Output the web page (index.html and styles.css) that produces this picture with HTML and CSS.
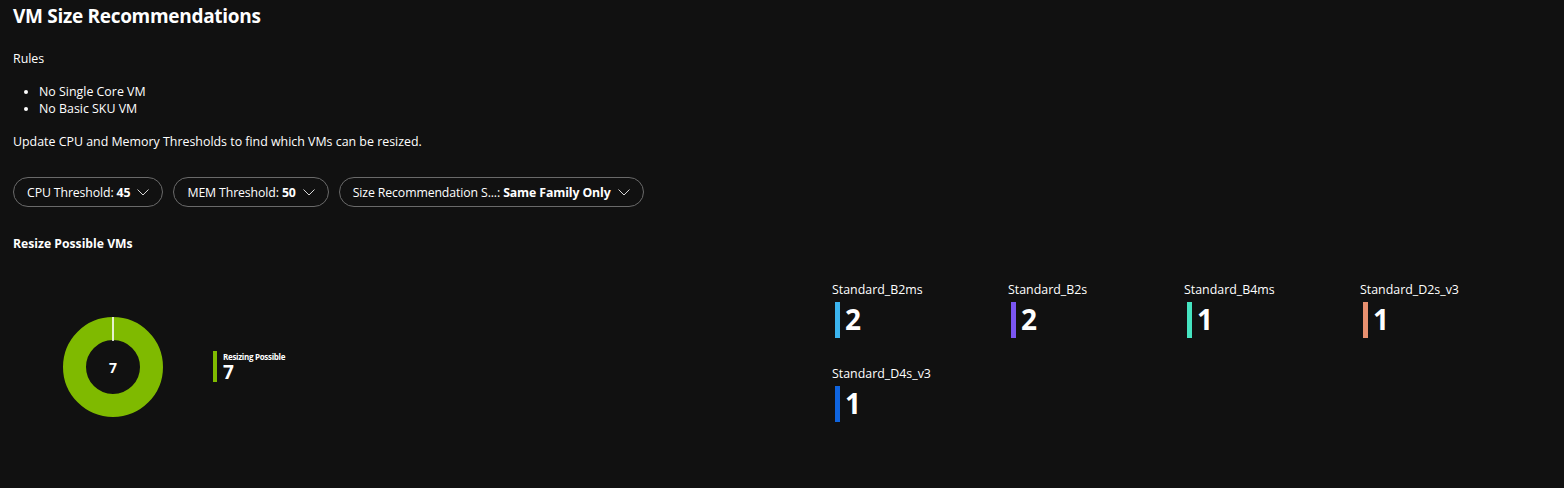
FILE: index.html
```html
<!DOCTYPE html>
<html lang="en">
<head>
<meta charset="utf-8">
<title>VM Size Recommendations</title>
<link rel="stylesheet" href="styles.css">
</head>
<body>
<main class="page">
  <h1 class="title">VM Size Recommendations</h1>
  <p class="rules">Rules</p>
  <ul class="rule-list">
    <li>No Single Core VM</li>
    <li>No Basic SKU VM</li>
  </ul>
  <p class="hint">Update CPU and Memory Thresholds to find which VMs can be resized.</p>

  <div class="filters">
    <button class="pill"><span>CPU Threshold: <b>45</b></span>
      <svg class="chev" viewBox="0 0 12 7" width="12" height="7"><polyline points="0.5,0.5 6,6 11.5,0.5" fill="none" stroke="#d6d6d6" stroke-width="1"/></svg>
    </button>
    <button class="pill"><span>MEM Threshold: <b>50</b></span>
      <svg class="chev" viewBox="0 0 12 7" width="12" height="7"><polyline points="0.5,0.5 6,6 11.5,0.5" fill="none" stroke="#d6d6d6" stroke-width="1"/></svg>
    </button>
    <button class="pill"><span>Size Recommendation S...: <b>Same Family Only</b></span>
      <svg class="chev" viewBox="0 0 12 7" width="12" height="7"><polyline points="0.5,0.5 6,6 11.5,0.5" fill="none" stroke="#d6d6d6" stroke-width="1"/></svg>
    </button>
  </div>

  <h2 class="section-title">Resize Possible VMs</h2>

  <section class="charts">
    <div class="donut-area">
      <div class="donut">
        <svg viewBox="0 0 100 100" width="100" height="100">
          <circle cx="50" cy="50" r="38.5" fill="none" stroke="#7fba00" stroke-width="23"/>
          <line x1="50" y1="0" x2="50" y2="24" stroke="#ffffff" stroke-width="1.6"/>
        </svg>
        <span class="donut-value">7</span>
      </div>
      <div class="legend">
        <span class="legend-bar"></span>
        <div class="legend-text">
          <span class="legend-label">Resizing Possible</span>
          <span class="legend-value">7</span>
        </div>
      </div>
    </div>

    <div class="tiles">
      <div class="tile">
        <div class="tile-label">Standard_B2ms</div>
        <div class="tile-body"><span class="tile-bar c-b2ms"></span><span class="tile-value">2</span></div>
      </div>
      <div class="tile">
        <div class="tile-label">Standard_B2s</div>
        <div class="tile-body"><span class="tile-bar c-b2s"></span><span class="tile-value">2</span></div>
      </div>
      <div class="tile">
        <div class="tile-label">Standard_B4ms</div>
        <div class="tile-body"><span class="tile-bar c-b4ms"></span><span class="tile-value">1</span></div>
      </div>
      <div class="tile">
        <div class="tile-label">Standard_D2s_v3</div>
        <div class="tile-body"><span class="tile-bar c-d2s"></span><span class="tile-value">1</span></div>
      </div>
      <div class="tile">
        <div class="tile-label">Standard_D4s_v3</div>
        <div class="tile-body"><span class="tile-bar c-d4s"></span><span class="tile-value">1</span></div>
      </div>
    </div>
  </section>
</main>
</body>
</html>
```

FILE: styles.css
```css
html, body {
  margin: 0;
  padding: 0;
  background: #111111;
  color: #ffffff;
  font-family: "Open Sans", "Noto Sans", sans-serif;
  font-size: 12.4px;
}

.page {
  padding: 0 13px;
  height: 488px;
  box-sizing: border-box;
}

.title {
  margin: 0;
  font-size: 19px;
  font-weight: 700;
  line-height: 32px;
  letter-spacing: -0.3px;
}

.rules {
  margin: 18px 0 0;
  line-height: 18px;
}

.rule-list {
  margin: 15px 0 0;
  padding-left: 26px;
  line-height: 17px;
}

.hint {
  margin: 16px 0 0;
  line-height: 18px;
}

.filters {
  display: flex;
  gap: 10px;
  margin-top: 26px;
}

.pill {
  display: inline-flex;
  align-items: center;
  gap: 7px;
  height: 30px;
  box-sizing: border-box;
  padding: 0 13px 0 13px;
  background: transparent;
  border: 1px solid #6a6a6a;
  border-radius: 15px;
  color: #ffffff;
  font-family: inherit;
  font-size: 12.3px;
  letter-spacing: -0.12px;
  white-space: nowrap;
}

.pill b {
  font-weight: 700;
}

.chev {
  display: block;
}

.section-title {
  margin: 28px 0 0;
  font-size: 12.2px;
  font-weight: 700;
  line-height: 18px;
}

.charts {
  display: flex;
  margin-top: 29px;
}

.donut-area {
  width: 819px;
  display: flex;
  align-items: center;
  padding-top: 35px;
  padding-left: 50px;
  align-self: flex-start;
  box-sizing: border-box;
}

.donut {
  position: relative;
  width: 100px;
  height: 100px;
}

.donut svg {
  display: block;
}

.donut-value {
  position: absolute;
  inset: 0;
  display: flex;
  align-items: center;
  justify-content: center;
  font-size: 14px;
  font-weight: 700;
}

.legend {
  display: flex;
  align-items: stretch;
  gap: 6px;
  margin-left: 50px;
  margin-top: -2px;
}

.legend-bar {
  width: 4px;
  background: #7fba00;
}

.legend-text {
  display: flex;
  flex-direction: column;
}

.legend-label {
  font-size: 8px;
  font-weight: 700;
  line-height: 11px;
  letter-spacing: -0.3px;
}

.legend-value {
  font-size: 19px;
  font-weight: 700;
  line-height: 20px;
}

.tiles {
  display: grid;
  grid-template-columns: repeat(4, 176px);
  row-gap: 28px;
}

.tile-label {
  line-height: 16px;
}

.tile-body {
  display: flex;
  align-items: stretch;
  gap: 5px;
  margin-top: 4px;
  height: 36px;
  padding-left: 3px;
}

.tile-bar {
  width: 5px;
}

.tile-value {
  font-size: 28px;
  font-weight: 700;
  line-height: 40px;
  margin-top: -3px;
}

.c-b2ms { background: #3bb4ee; }
.c-b2s { background: #7a55f2; }
.c-b4ms { background: #45e3c0; }
.c-d2s { background: #e8906f; }
.c-d4s { background: #0f64de; }
```
